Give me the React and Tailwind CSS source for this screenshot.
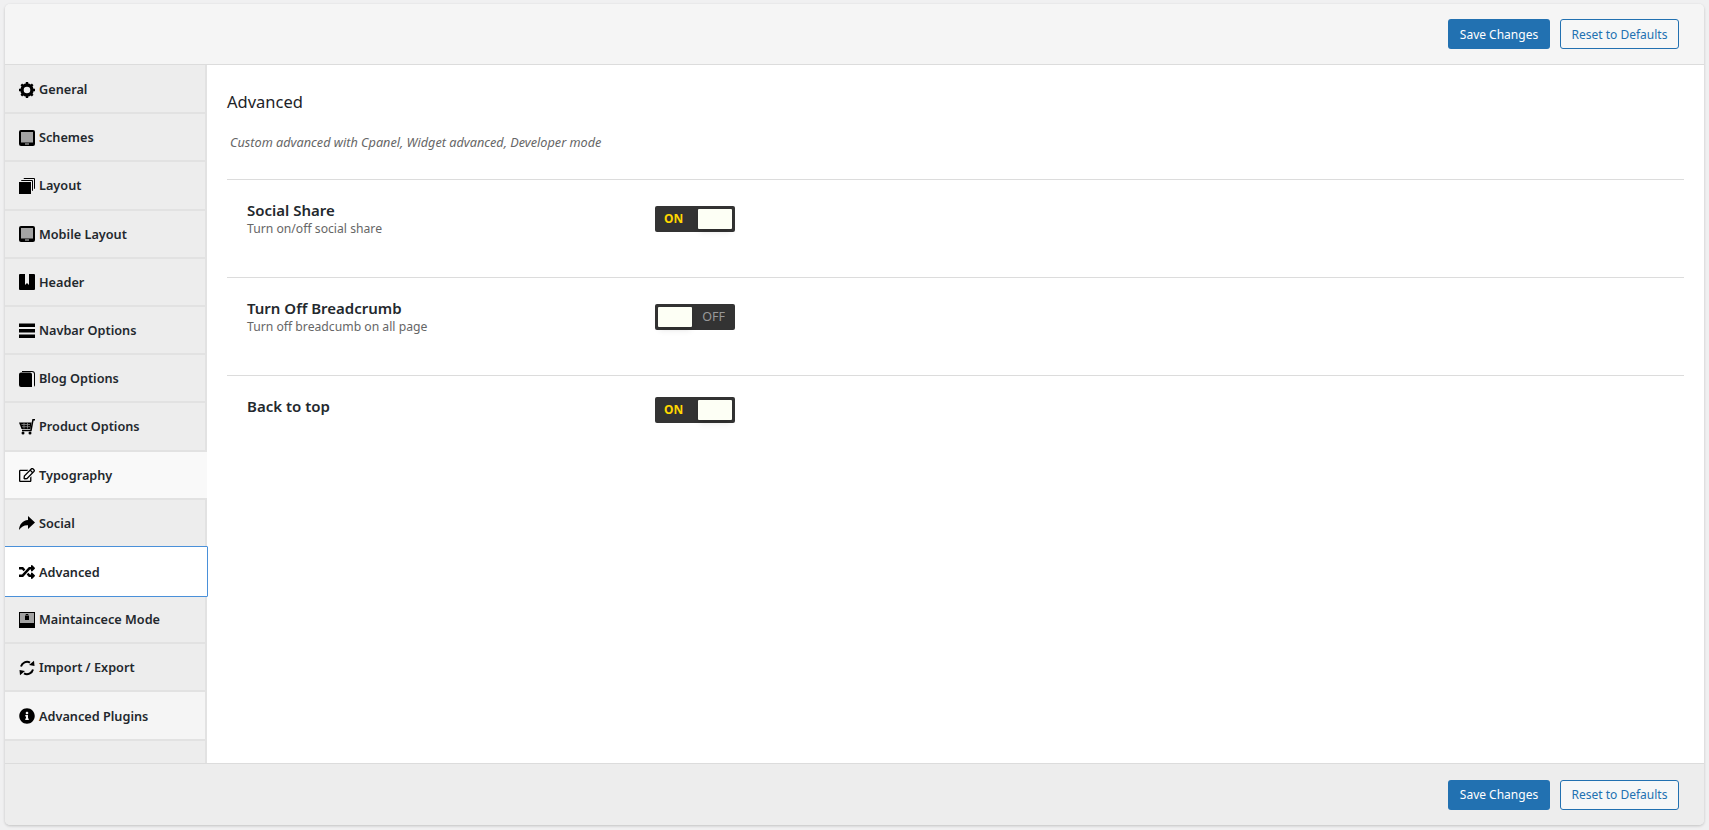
import { FaInfoCircle, FaRandom, FaRegEdit } from "react-icons/fa";

function GearIcon() {
  return (
    <svg viewBox="0 0 16 16" className="w-4 h-4">
      <circle cx="8" cy="8" r="5" fill="none" stroke="#000" strokeWidth="3.4" />
      <g stroke="#000" strokeWidth="2.4">
        <path d="M8 0v3M8 13v3M0 8h3M13 8h3M2.3 2.3l2.2 2.2M11.5 11.5l2.2 2.2M13.7 2.3l-2.2 2.2M4.5 11.5l-2.2 2.2" />
      </g>
    </svg>
  );
}

function TabletIcon() {
  return (
    <svg viewBox="0 0 16 16" className="w-4 h-4">
      <rect x="0" y="0" width="16" height="16" rx="2" fill="#000" />
      <rect x="2" y="2" width="12" height="10.5" fill="#a3a3a3" />
      <rect x="6" y="13.5" width="4" height="1" fill="#ccc" />
    </svg>
  );
}

function StackIcon() {
  return (
    <svg viewBox="0 0 16 16" className="w-4 h-4">
      <rect x="0" y="4" width="12" height="12" fill="#000" />
      <path d="M2.5 3V2.5h11v10H13M5 1V.5h10.5v10H15" fill="none" stroke="#000" strokeWidth="1" />
    </svg>
  );
}

function BookmarkIcon() {
  return (
    <svg viewBox="0 0 16 16" className="w-4 h-4">
      <path d="M1 0h5v11l2-2 2 2V0h5a1 1 0 0 1 1 1v14a1 1 0 0 1-1 1H1a1 1 0 0 1-1-1V1a1 1 0 0 1 1-1z" fill="#000" />
    </svg>
  );
}

function BarsIcon() {
  return (
    <svg viewBox="0 0 16 16" className="w-4 h-4">
      <rect x="0" y="0.5" width="16" height="3.5" fill="#000" />
      <rect x="0" y="6" width="16" height="3.5" fill="#000" />
      <rect x="0" y="11.5" width="16" height="3.5" fill="#000" />
    </svg>
  );
}

function BookIcon() {
  return (
    <svg viewBox="0 0 16 16" className="w-4 h-4">
      <path d="M3 0h10a3 3 0 0 1 3 3v11a2 2 0 0 1-1 1.7V3a2 2 0 0 0-2-2H3z" fill="#000" />
      <path d="M2 1.5h9a2 2 0 0 1 2 2V16H2a2 2 0 0 1-2-2V3.5a2 2 0 0 1 2-2z" fill="#000" />
    </svg>
  );
}

function CartIcon() {
  return (
    <svg viewBox="0 0 16 16" className="w-4 h-4">
      <path d="M0 3.5h12.5L11.5 10H2.5z" fill="#000" />
      <path d="M2.5 5.5h8.5M3 7.7h8M5 4v5.5M8.5 4v5.5" stroke="#888" strokeWidth="0.8" />
      <path d="M16 .7h-2L12 11.5H3" fill="none" stroke="#000" strokeWidth="1.5" />
      <circle cx="4" cy="14" r="1.5" fill="#000" />
      <circle cx="11" cy="14" r="1.5" fill="#000" />
    </svg>
  );
}

function ShareIcon() {
  return (
    <svg viewBox="0 0 16 16" className="w-4 h-4">
      <path d="M9 1 16 7.500 9 14v-3.800C5 10 2.500 11.500 0 15c.3-5.500 3.500-9.500 9-10z" fill="#000" />
    </svg>
  );
}

function LockScreenIcon() {
  return (
    <svg viewBox="0 0 16 16" className="w-4 h-4">
      <rect width="16" height="16" fill="#000" />
      <rect x="1" y="1" width="14" height="10" fill="#a3a3a3" />
      <rect x="6" y="4" width="4" height="4" fill="#000" />
      <path d="M7 4V2.500h2V4" stroke="#000" fill="none" />
    </svg>
  );
}

function RefreshIcon() {
  return (
    <svg viewBox="0 0 16 16" className="w-4 h-4">
      <path d="M2 6.500A6.200 6.200 0 0 1 11 2.600M14 9.500A6.200 6.200 0 0 1 5 13.400" fill="none" stroke="#000" strokeWidth="2" />
      <path d="M10 5 15.500 6 15 .8zM6 11 .5 10 1 15.200z" fill="#000" />
    </svg>
  );
}

const tabs = [
  { label: "General", icon: <GearIcon /> },
  { label: "Schemes", icon: <TabletIcon /> },
  { label: "Layout", icon: <StackIcon /> },
  { label: "Mobile Layout", icon: <TabletIcon /> },
  { label: "Header", icon: <BookmarkIcon /> },
  { label: "Navbar Options", icon: <BarsIcon /> },
  { label: "Blog Options", icon: <BookIcon /> },
  { label: "Product Options", icon: <CartIcon /> },
  { label: "Typography", icon: <FaRegEdit className="w-4 h-4 text-black" />, hover: true },
  { label: "Social", icon: <ShareIcon /> },
  { label: "Advanced", icon: <FaRandom className="w-4 h-4 text-black" />, active: true },
  { label: "Maintaincece Mode", icon: <LockScreenIcon /> },
  { label: "Import / Export", icon: <RefreshIcon /> },
  { label: "Advanced Plugins", icon: <FaInfoCircle className="w-4 h-4 text-black" />, light: true },
];

const settings = [
  { title: "Social Share", desc: "Turn on/off social share", on: true, row: "h-[98px] pt-[21px]", toggle: "mt-[5px]" },
  { title: "Turn Off Breadcrumb", desc: "Turn off breadcumb on all page", on: false, row: "h-[98px] pt-[21px]", toggle: "mt-[5px]" },
  { title: "Back to top", on: true, row: "h-[60px] pt-[21px]", toggle: "mt-0" },
];

function ActionButtons() {
  return (
    <div className="flex justify-end gap-[10px] pr-[25px]">
      <button className="h-[30px] w-[102px] rounded-[3px] bg-[#2271b1] pt-px text-[12px] text-white">Save Changes</button>
      <button className="h-[30px] w-[119px] rounded-[3px] border border-[#2271b1] bg-[#f6f7f7] pt-px text-[12px] text-[#2271b1]">
        Reset to Defaults
      </button>
    </div>
  );
}

function Toggle({ on, className }) {
  return (
    <div className={`flex h-[26px] w-[80px] items-center justify-between rounded-[2px] bg-[#333] p-[3px] ${className}`}>
      {on ? (
        <>
          <span className="pl-[6px] text-[12px] font-bold text-[#ffd700]">ON</span>
          <span className="h-5 w-[34px] rounded-[1px] bg-[#fdfff5] shadow-md"></span>
        </>
      ) : (
        <>
          <span className="h-5 w-[34px] rounded-[1px] bg-[#fdfff5] shadow-md"></span>
          <span className="pr-[7px] text-[12.5px] text-[#999]">OFF</span>
        </>
      )}
    </div>
  );
}

function App() {
  return (
    <div className="h-[830px] overflow-hidden bg-[#f0f0f1] px-[5px] pt-[4px] font-['Noto_Sans',sans-serif] text-[#23282d]">
      <div className="flex h-[821px] flex-col overflow-hidden rounded-[5px] shadow-[0_1px_3px_rgba(0,0,0,0.2)]">
        <div className="flex h-[61px] shrink-0 items-center justify-end border-b border-[#dcdcdc] bg-[#f5f5f5]">
          <ActionButtons />
        </div>
        <div className="flex min-h-0 flex-1">
          <div className="flex w-[202px] shrink-0 flex-col border-r-2 border-[#e2e2e2] bg-[#ededed] pt-px">
            {tabs.map((tab) => (
              <div
                key={tab.label}
                className={
                  tab.active
                    ? "relative z-10 -mt-[2px] -mr-[3px] -mb-px -ml-px flex h-[51.2px] items-center gap-[4px] rounded-[1px] border border-[#4a90d9] bg-white pt-[2px] pl-[14px] text-[12.7px] font-semibold"
                    : tab.hover
                      ? "-mr-[2px] flex h-[48.2px] items-center gap-[4px] border-b-2 border-[#e2e2e2] bg-[#f9f9f9] pt-[1px] pl-[14px] text-[12.7px] font-semibold"
                      : tab.light
                        ? "flex h-[48.2px] items-center gap-[4px] border-b-2 border-[#e2e2e2] bg-[#f5f5f5] pt-[1px] pl-[14px] text-[12.7px] font-semibold"
                        : "flex h-[48.2px] items-center gap-[4px] border-b-2 border-[#e2e2e2] pt-[1px] pl-[14px] text-[12.7px] font-semibold"
                }
              >
                {tab.icon}
                <span>{tab.label}</span>
              </div>
            ))}
          </div>
          <div className="min-w-0 flex-1 bg-white pr-[20px] pl-[20px]">
            <h2 className="pt-[25px] text-[16.5px] leading-[24px] text-[#1d2327]">Advanced</h2>
            <p className="pt-[18px] pb-[27px] pl-[3px] text-[12.7px] leading-[20px] text-[#666] italic">
              Custom advanced with Cpanel, Widget advanced, Developer mode
            </p>
            {settings.map((s) => (
              <div key={s.title} className={`flex border-t border-[#dcdcdc] pl-[20px] ${s.row}`}>
                <div className="w-[408px]">
                  <div className="text-[15px] leading-[19px] font-semibold">{s.title}</div>
                  {s.desc && <div className="text-[12.2px] leading-[17px] text-[#666]">{s.desc}</div>}
                </div>
                <Toggle on={s.on} className={s.toggle} />
              </div>
            ))}
          </div>
        </div>
        <div className="flex h-[62px] shrink-0 items-center justify-end border-t border-[#dcdcdc] bg-[#ededed]">
          <ActionButtons />
        </div>
      </div>
    </div>
  );
}

export default App;
